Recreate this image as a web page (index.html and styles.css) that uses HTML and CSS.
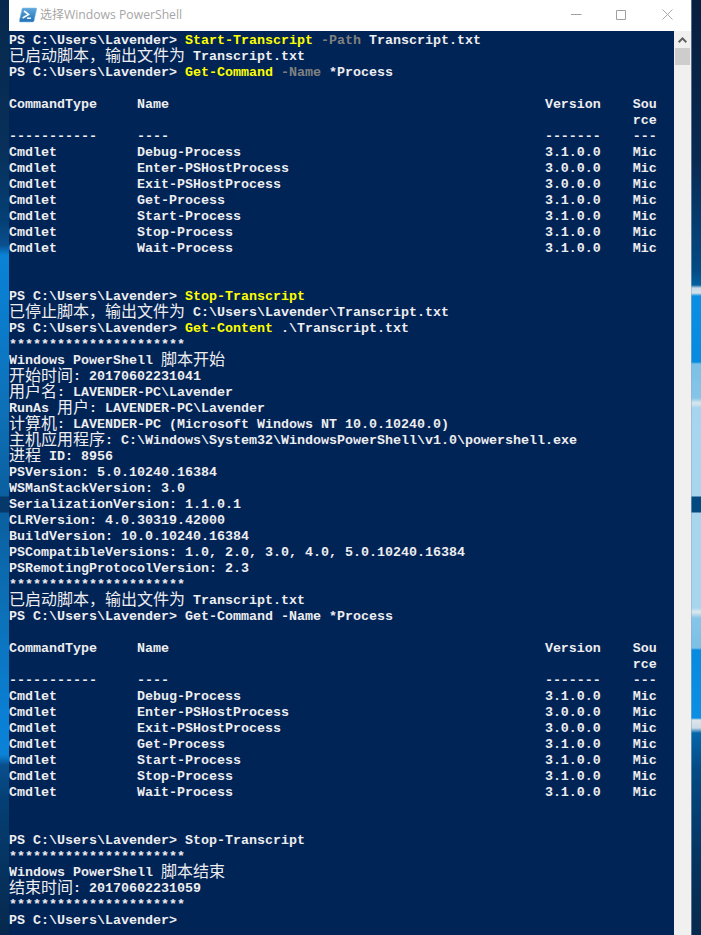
FILE: index.html
```html
<!DOCTYPE html>
<html lang="zh-CN">
<head>
<meta charset="utf-8">
<title>选择Windows PowerShell</title>
<link rel="stylesheet" href="styles.css">
</head>
<body>
<div class="desk desk-left"></div>
<main class="window">
  <header class="titlebar">
    <svg class="app-icon" width="18" height="16" viewBox="0 0 18 16">
      <defs><linearGradient id="psg" x1="0" y1="0" x2="0" y2="1"><stop offset="0" stop-color="#5fa8dc"/><stop offset="1" stop-color="#1f6fb5"/></linearGradient></defs>
      <path d="M4.2 1h12.6c.7 0 1 .4.9 1l-2.6 11.8c-.1.7-.6 1.2-1.3 1.2H1.2c-.7 0-1-.5-.9-1.2L3 2c.1-.6.6-1 1.2-1z" fill="url(#psg)" stroke="#8fc3e6" stroke-width=".6"/>
      <path d="M5 4l4.6 3.4L3.6 11" fill="none" stroke="#fff" stroke-width="1.6"/>
      <path d="M8 11.2h4" fill="none" stroke="#fff" stroke-width="1.4"/>
    </svg>
    <span class="title"><span class="title-cjk">选择</span>Windows PowerShell</span>
    <div class="controls">
      <svg class="ctl ctl-min" width="11" height="11" viewBox="0 0 11 11"><path d="M0 5.5h10.5" stroke="#a0a0a0" fill="none"/></svg>
      <svg class="ctl ctl-max" width="11" height="11" viewBox="0 0 11 11"><path d="M.5 1.5h9v9h-9z" stroke="#a0a0a0" fill="none"/></svg>
      <svg class="ctl ctl-close" width="11" height="11" viewBox="0 0 11 11"><path d="M.5.5l10 10M10.5.5l-10 10" stroke="#a8a8a8" fill="none"/></svg>
    </div>
  </header>
  <div class="body">
    <div class="console">
<div class="ln">PS C:\Users\Lavender&gt; <span class="y">Start-Transcript</span> <span class="g">-Path</span> Transcript.txt</div>
<div class="ln"><span class="c">已启动脚本，输出文件为</span> Transcript.txt</div>
<div class="ln">PS C:\Users\Lavender&gt; <span class="y">Get-Command</span> <span class="g">-Name</span> *Process</div>
<div class="ln"></div>
<div class="ln">CommandType     Name                                               Version    Sou</div>
<div class="ln">                                                                              rce</div>
<div class="ln">-----------     ----                                               -------    ---</div>
<div class="ln">Cmdlet          Debug-Process                                      3.1.0.0    Mic</div>
<div class="ln">Cmdlet          Enter-PSHostProcess                                3.0.0.0    Mic</div>
<div class="ln">Cmdlet          Exit-PSHostProcess                                 3.0.0.0    Mic</div>
<div class="ln">Cmdlet          Get-Process                                        3.1.0.0    Mic</div>
<div class="ln">Cmdlet          Start-Process                                      3.1.0.0    Mic</div>
<div class="ln">Cmdlet          Stop-Process                                       3.1.0.0    Mic</div>
<div class="ln">Cmdlet          Wait-Process                                       3.1.0.0    Mic</div>
<div class="ln"></div>
<div class="ln"></div>
<div class="ln">PS C:\Users\Lavender&gt; <span class="y">Stop-Transcript</span></div>
<div class="ln"><span class="c">已停止脚本，输出文件为</span> C:\Users\Lavender\Transcript.txt</div>
<div class="ln">PS C:\Users\Lavender&gt; <span class="y">Get-Content</span> .\Transcript.txt</div>
<div class="ln">**********************</div>
<div class="ln">Windows PowerShell <span class="c">脚本开始</span></div>
<div class="ln"><span class="c">开始时间</span>: 20170602231041</div>
<div class="ln"><span class="c">用户名</span>: LAVENDER-PC\Lavender</div>
<div class="ln">RunAs <span class="c">用户</span>: LAVENDER-PC\Lavender</div>
<div class="ln"><span class="c">计算机</span>: LAVENDER-PC (Microsoft Windows NT 10.0.10240.0)</div>
<div class="ln"><span class="c">主机应用程序</span>: C:\Windows\System32\WindowsPowerShell\v1.0\powershell.exe</div>
<div class="ln"><span class="c">进程</span> ID: 8956</div>
<div class="ln">PSVersion: 5.0.10240.16384</div>
<div class="ln">WSManStackVersion: 3.0</div>
<div class="ln">SerializationVersion: 1.1.0.1</div>
<div class="ln">CLRVersion: 4.0.30319.42000</div>
<div class="ln">BuildVersion: 10.0.10240.16384</div>
<div class="ln">PSCompatibleVersions: 1.0, 2.0, 3.0, 4.0, 5.0.10240.16384</div>
<div class="ln">PSRemotingProtocolVersion: 2.3</div>
<div class="ln">**********************</div>
<div class="ln"><span class="c">已启动脚本，输出文件为</span> Transcript.txt</div>
<div class="ln">PS C:\Users\Lavender&gt; Get-Command -Name *Process</div>
<div class="ln"></div>
<div class="ln">CommandType     Name                                               Version    Sou</div>
<div class="ln">                                                                              rce</div>
<div class="ln">-----------     ----                                               -------    ---</div>
<div class="ln">Cmdlet          Debug-Process                                      3.1.0.0    Mic</div>
<div class="ln">Cmdlet          Enter-PSHostProcess                                3.0.0.0    Mic</div>
<div class="ln">Cmdlet          Exit-PSHostProcess                                 3.0.0.0    Mic</div>
<div class="ln">Cmdlet          Get-Process                                        3.1.0.0    Mic</div>
<div class="ln">Cmdlet          Start-Process                                      3.1.0.0    Mic</div>
<div class="ln">Cmdlet          Stop-Process                                       3.1.0.0    Mic</div>
<div class="ln">Cmdlet          Wait-Process                                       3.1.0.0    Mic</div>
<div class="ln"></div>
<div class="ln"></div>
<div class="ln">PS C:\Users\Lavender&gt; Stop-Transcript</div>
<div class="ln">**********************</div>
<div class="ln">Windows PowerShell <span class="c">脚本结束</span></div>
<div class="ln"><span class="c">结束时间</span>: 20170602231059</div>
<div class="ln">**********************</div>
<div class="ln">PS C:\Users\Lavender&gt;</div>
    </div>
    <aside class="scrollbar">
      <svg class="arrow" width="9" height="6" viewBox="0 0 9 6"><path d="M.7 5.2L4.5 1.4l3.8 3.8" fill="none" stroke="#606060" stroke-width="2"/></svg>
      <div class="thumb"></div>
    </aside>
  </div>
</main>
<div class="desk desk-right"></div>
</body>
</html>
```
FILE: styles.css
```css
html, body {
  margin: 0;
  height: 100%;
  overflow: hidden;
}
body {
  display: flex;
  width: 701px;
  height: 935px;
  background: #012456;
}
.desk-left {
  width: 9px;
  flex: none;
  background: linear-gradient(to bottom,
    #07284c 0, #08305a 150px, #043f74 220px, #0a4f8e 245px,
    #0a82d6 255px, #0a7ed0 300px, #0e6fb5 420px, #0a5f9f 496px,
    #06386a 497px, #06386a 512px, #0a5f9f 513px, #0c6fb5 600px,
    #0a80d5 720px, #0a82d6 755px, #0a4f8e 765px, #043f74 800px,
    #07284c 935px);
}
.desk-right {
  width: 10px;
  flex: none;
  box-shadow: inset 1px 0 0 rgba(160, 170, 180, .55);
  background: linear-gradient(to bottom,
    #071f3f 0, #082a52 160px, #034a84 270px, #04609f 285px,
    #c9dbe6 288px, #d2e2ea 293px, #0a8fe4 296px, #078be0 362px,
    #7cc0e6 364px, #86c5e8 398px, #d8e8ef 403px, #a7d4ee 408px,
    #a9d6ef 496px, #034a80 497px, #034a80 512px, #a9d6ef 513px,
    #a9d6ef 608px, #dbe9ef 612px, #86c5e8 618px, #7cc0e6 648px,
    #078be0 650px, #0a8fe4 718px, #dce6ea 720px, #c9dbe6 728px,
    #0467ab 733px, #034a84 770px, #05345f 860px, #072a4e 935px);
}
.window {
  flex: none;
  width: 682px;
  height: 935px;
  display: flex;
  flex-direction: column;
  background: #fff;
}
.titlebar {
  flex: none;
  height: 31px;
  display: flex;
  align-items: center;
  padding-left: 10px;
  box-sizing: border-box;
  background: #fff;
}
.app-icon {
  flex: none;
  margin-top: -2px;
}
.title {
  margin-left: 3px;
  margin-top: -2px;
  font: 12.2px/16px "Open Sans", "Noto Sans CJK SC", sans-serif;
  color: #a6a6a6;
  white-space: nowrap;
}
.title-cjk {
  font: 12px/16px "Noto Sans CJK SC", sans-serif;
}
.controls {
  margin-left: auto;
  display: flex;
  align-items: center;
  gap: 35px;
  padding-right: 18px;
  margin-top: -3px;
}
.ctl {
  display: block;
}
.ctl-min {
  margin-right: -1px;
}
.body {
  flex: 1;
  display: flex;
  min-height: 0;
}
.console {
  flex: 1;
  min-width: 0;
  padding-top: 2px;
  overflow: hidden;
  background: #012456;
  color: #eeedf0;
  font: bold 13.333px/16px "Liberation Mono", "Noto Sans CJK SC", monospace;
}
.ln {
  height: 16px;
  white-space: pre;
}
.y {
  color: #ffff00;
}
.g {
  color: #808080;
}
.c {
  font: 400 16px/0 "Noto Sans CJK SC", sans-serif;
  vertical-align: -1px;
}
.scrollbar {
  flex: none;
  width: 17px;
  display: flex;
  flex-direction: column;
  align-items: center;
  background: #f0f0f0;
}
.arrow {
  display: block;
  margin-top: 6px;
  flex: none;
}
.thumb {
  width: 15px;
  height: 17px;
  margin-top: 5px;
  background: #cdcdcd;
}
```
